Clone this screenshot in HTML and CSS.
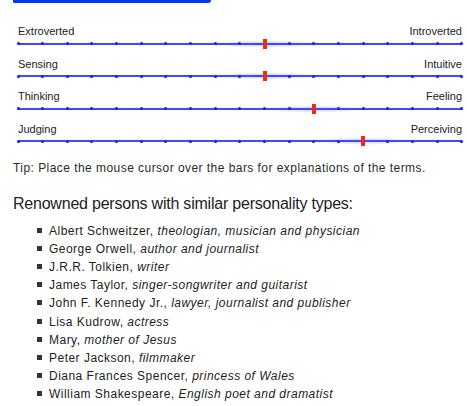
FILE: index.html
```html
<!DOCTYPE html>
<html lang="en">
<head>
    <meta charset="UTF-8">
    <title>Personality type</title>
    <link rel="stylesheet" href="styles.css">
</head>
<body>
    <div class="page">
        <div class="topbar"></div>

        <div class="scales">
            <div class="scale">
                <div class="labels"><span>Extroverted</span><span>Introverted</span></div>
                <div class="track">
                    <span></span><span></span><span></span><span></span><span></span><span></span><span></span><span></span><span></span><span></span>
                    <span></span><span></span><span></span><span></span><span></span><span></span><span></span><span></span><span></span>
                    <div class="marker" style="--pos: 10"></div>
                </div>
            </div>
            <div class="scale">
                <div class="labels"><span>Sensing</span><span>Intuitive</span></div>
                <div class="track">
                    <span></span><span></span><span></span><span></span><span></span><span></span><span></span><span></span><span></span><span></span>
                    <span></span><span></span><span></span><span></span><span></span><span></span><span></span><span></span><span></span>
                    <div class="marker" style="--pos: 10"></div>
                </div>
            </div>
            <div class="scale">
                <div class="labels"><span>Thinking</span><span>Feeling</span></div>
                <div class="track">
                    <span></span><span></span><span></span><span></span><span></span><span></span><span></span><span></span><span></span><span></span>
                    <span></span><span></span><span></span><span></span><span></span><span></span><span></span><span></span><span></span>
                    <div class="marker" style="--pos: 12"></div>
                </div>
            </div>
            <div class="scale">
                <div class="labels"><span>Judging</span><span>Perceiving</span></div>
                <div class="track">
                    <span></span><span></span><span></span><span></span><span></span><span></span><span></span><span></span><span></span><span></span>
                    <span></span><span></span><span></span><span></span><span></span><span></span><span></span><span></span><span></span>
                    <div class="marker" style="--pos: 14"></div>
                </div>
            </div>
        </div>

        <p class="tip">Tip: Place the mouse cursor over the bars for explanations of the terms.</p>

        <h3>Renowned persons with similar personality types:</h3>
        <ul class="persons">
            <li>Albert Schweitzer, <i>theologian, musician and physician</i></li>
            <li>George Orwell, <i>author and journalist</i></li>
            <li>J.R.R. Tolkien, <i>writer</i></li>
            <li>James Taylor, <i>singer-songwriter and guitarist</i></li>
            <li>John F. Kennedy Jr., <i>lawyer, journalist and publisher</i></li>
            <li>Lisa Kudrow, <i>actress</i></li>
            <li>Mary, <i>mother of Jesus</i></li>
            <li>Peter Jackson, <i>filmmaker</i></li>
            <li>Diana Frances Spencer, <i>princess of Wales</i></li>
            <li>William Shakespeare, <i>English poet and dramatist</i></li>
        </ul>
    </div>
</body>
</html>
```

FILE: styles.css
```css
body {
    font-family: "Liberation Sans", Arial, sans-serif;
    color: #222;
    background-color: #fff;
    margin: 0;
    padding: 0;
}
.page {
    margin-left: 13px;
    width: 454px;
}
.topbar {
    width: 198px;
    height: 3px;
    background-color: #0636f2;
    border-radius: 0 0 4px 2px;
}
.scales {
    margin-top: 22px;
    padding: 0 5px;
}
.scale {
    height: 32.67px;
}
.labels {
    display: flex;
    justify-content: space-between;
    font-size: 11px;
    line-height: 13px;
}
.track {
    position: relative;
    height: 11px;
    margin: 0 -1.5px;
    display: flex;
    justify-content: space-between;
    align-items: center;
    background: linear-gradient(#4646ff, #4646ff) center / calc(100% - 3px) 2px no-repeat;
}
.track span {
    width: 3px;
    height: 3px;
    border-radius: 50%;
    background-color: #2424d8;
    box-shadow: 0 0 1px rgba(60, 60, 255, 0.5);
}
.marker {
    position: absolute;
    top: 0.5px;
    left: calc(1.5px + (100% - 3px) * var(--pos) / 18 - 2px);
    width: 4px;
    height: 10px;
    background-color: #f32a12;
}
.marker::before {
    content: "";
    position: absolute;
    z-index: -1;
    left: -55px;
    top: 1px;
    width: 114px;
    height: 8px;
    background: radial-gradient(ellipse at center, rgba(130, 175, 255, 0.55), rgba(170, 205, 255, 0) 70%);
}
.tip {
    margin: 5.7px 0 0;
    font-size: 12px;
    line-height: 14px;
    letter-spacing: 0.45px;
    color: #2a2a2a;
}
h3 {
    margin: 20px 0 8.3px;
    font-size: 16px;
    line-height: 18px;
    font-weight: normal;
    letter-spacing: -0.22px;
}
.persons {
    list-style: none;
    margin: 0;
    padding: 0;
    font-size: 12px;
    line-height: 18.2px;
    letter-spacing: 0.48px;
}
.persons li::before {
    content: "";
    display: inline-block;
    width: 5px;
    height: 5px;
    margin: 0 7px 0 24px;
    vertical-align: 2px;
    background-color: #333;
}
```
